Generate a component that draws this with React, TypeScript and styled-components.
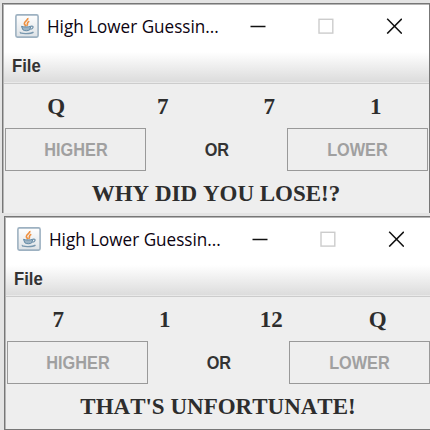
import React from "react";
import styled, { createGlobalStyle } from "styled-components";

const GlobalStyle = createGlobalStyle`
  * { box-sizing: border-box; }
  html, body { margin: 0; background: #e4e4e4; overflow: hidden; }
`;

const Desktop = styled.main`
  width: 430px;
  height: 430px;
  padding-top: 3px;
  overflow: hidden;
  background: #e4e4e4;
`;

const Frame = styled.section<{ $inset: number; $open?: boolean }>`
  width: 428px;
  height: ${(p) => (p.$open ? 210 : 214)}px;
  margin-left: ${(p) => p.$inset}px;
  margin-bottom: ${(p) => (p.$open ? 3 : 0)}px;
  border: 1px solid #777;
  border-bottom: ${(p) => (p.$open ? "0" : "1px solid #777")};
  box-shadow: inset 1px 1px 0 #b5b5b5;
  background: #eee;
  display: flex;
  flex-direction: column;
`;

const TitleBar = styled.header`
  height: 43px;
  flex: none;
  margin: 1px 0 0 1px;
  padding: 0 0 1px 11px;
  display: flex;
  align-items: center;
  background: #fff;
`;

const Title = styled.h1`
  width: 185px;
  flex: none;
  margin: 0 0 0 8px;
  font: 400 18px/26px "Open Sans", "Noto Sans", sans-serif;
  color: #0c0310;
  white-space: nowrap;
  transform: scaleX(0.95);
  transform-origin: left;
`;

const Controls = styled.div`
  display: flex;
  gap: 52px;
  margin: 0 0 1px 18px;
  svg { display: block; flex: none; }
`;

const MenuBar = styled.nav`
  height: 36px;
  flex: none;
  margin-left: 1px;
  padding: 7px 0 0 8px;
  border-bottom: 1px solid #ccc;
  box-shadow: inset 0 -1px 0 #e9e9e9;
  background: linear-gradient(#fff 4px, #dcdcdc 34px);
`;

const Label = styled.span<{ $muted?: boolean; $stretch?: number }>`
  display: inline-block;
  font: 700 18.5px/22px "Liberation Sans", Arial, sans-serif;
  color: ${(p) => (p.$muted ? "#a0a0a0" : "#333")};
  transform: scaleX(${(p) => p.$stretch ?? 0.88});
`;

const FileLabel = styled(Label)`
  transform-origin: left;
`;

const Cards = styled.div`
  height: 44px;
  flex: none;
  padding-top: 1px;
  display: grid;
  grid-template-columns: repeat(4, 1fr);
  align-items: center;
  justify-items: center;
`;

const SerifText = styled.span`
  font: 700 23px/26px "Liberation Serif", "Times New Roman", serif;
  font-kerning: none;
  color: #2d2d2d;
  white-space: nowrap;
`;

const Choices = styled.div`
  height: 43px;
  flex: none;
  padding: 0 0 0 2px;
  display: grid;
  grid-template-columns: 141px 141px 141px;
  align-items: center;
  justify-items: center;
`;

const Choice = styled.button`
  width: 141px;
  height: 43px;
  padding: 0;
  border: 1px solid #999;
  border-radius: 0;
  background: #eee;
`;

const Message = styled.div`
  flex: 1;
  padding-top: 10px;
  text-align: center;
`;

const JavaIcon = () => (
  <svg width="24" height="24" viewBox="0 0 24 24" fill="none">
    <defs>
      <linearGradient id="tile" x1="0" y1="0" x2="0" y2="1">
        <stop offset="0" stopColor="#fff" />
        <stop offset="1" stopColor="#dde2e6" />
      </linearGradient>
    </defs>
    <rect x=".9" y=".9" width="22.2" height="22.2" rx="1.5" fill="url(#tile)" stroke="#9db1c1" strokeWidth="1.6" />
    <path d="M12.8 4c.8 2.2-4.2 3.4-3.5 5.8.2.9 1.3 1.6 1.8 2.4M14.3 7.2c-3.3 1.4-1.2 2.6-2.2 4.4" stroke="#ee9040" strokeWidth="1.7" />
    <path d="M6.5 12.3c2 .9 6.8.9 9.3 0l-1 3.4c-1.5 1.4-5.5 1.4-7 0z" fill="#9db4c5" stroke="#6289a5" strokeWidth="1" />
    <path d="M15.9 12.3c3.2-.8 2.8 2.3-.6 3.1M5.5 18c-1.5 2 10 2.2 13 .2" stroke="#7897ae" strokeWidth="1.4" />
  </svg>
);

const WindowControls = () => (
  <Controls>
    <svg width="16" height="16" viewBox="0 0 16 16"><path d="M.5 8.5h15" stroke="#111" strokeWidth="1.5" /></svg>
    <svg width="16" height="16" viewBox="0 0 16 16"><rect x="1" y="1.3" width="13.8" height="13.8" fill="none" stroke="#ccc" strokeWidth="1.4" /></svg>
    <svg width="16" height="16" viewBox="0 0 16 16"><path d="m1.2.8 14.6 14.8m0-14.8L1.2 15.6" stroke="#111" strokeWidth="1.5" /></svg>
  </Controls>
);

interface GameProps {
  cards: string[];
  message: string;
  inset: number;
  open?: boolean;
}

const GameWindow = ({ cards, message, inset, open }: GameProps) => (
  <Frame $inset={inset} $open={open}>
    <TitleBar>
      <JavaIcon />
      <Title>High Lower Guessin...</Title>
      <WindowControls />
    </TitleBar>
    <MenuBar><FileLabel $stretch={0.9}>File</FileLabel></MenuBar>
    <Cards>{cards.map((card, i) => <SerifText key={i}>{card}</SerifText>)}</Cards>
    <Choices>
      <Choice disabled><Label $muted>HIGHER</Label></Choice>
      <Label>OR</Label>
      <Choice disabled><Label $muted>LOWER</Label></Choice>
    </Choices>
    <Message><SerifText>{message}</SerifText></Message>
  </Frame>
);

export default function App() {
  return (
    <>
      <GlobalStyle />
      <Desktop>
        <GameWindow inset={2} open cards={["Q", "7", "7", "1"]} message="WHY DID YOU LOSE!?" />
        <GameWindow inset={4} cards={["7", "1", "12", "Q"]} message="THAT'S UNFORTUNATE!" />
      </Desktop>
    </>
  );
}
